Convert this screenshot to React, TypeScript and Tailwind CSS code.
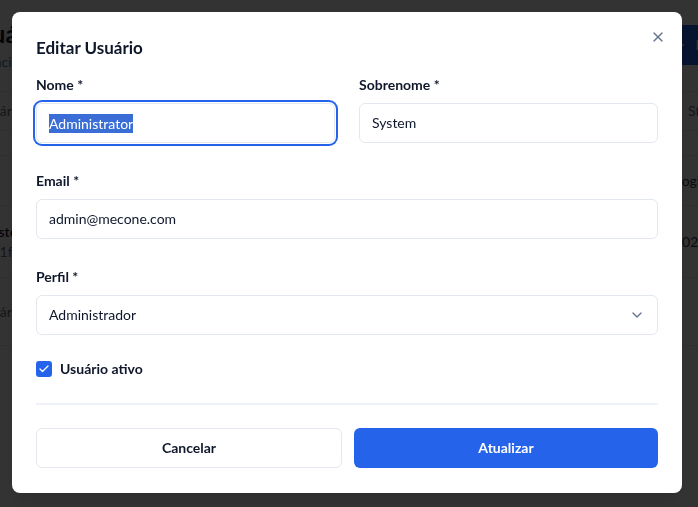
// EditUserDialog

import { X, ChevronDown, Check, Plus } from "lucide-react";

const font = { fontFamily: "Lato, 'Noto Sans', sans-serif" };

const BackgroundPage = () => {
  return (
    <div className="h-[507px] w-[698px] overflow-hidden bg-white">
      <div className="-ml-[96px] flex w-[900px] flex-col">
        <div className="flex items-start justify-between pl-[60px] pt-[18px]">
          <div>
            <div className="text-2xl font-bold text-slate-900">Usuários Mecone</div>
            <div className="mt-0.5 text-sm text-slate-500">Gerencie os usuários do sistema</div>
          </div>
          <div className="mt-[7px] flex h-10 items-center gap-2 rounded-md bg-[#2563eb] px-6 text-sm font-semibold text-white">
            <Plus size={16} />
            Novo Usuário
          </div>
        </div>
        <div className="mt-[19px] border-t border-slate-200">
          <div className="flex h-[39px] items-center border-b border-slate-200 pl-[72px] text-sm text-slate-500">
            <span className="flex-1">Usuário</span>
            <span className="w-[116px]">Status</span>
          </div>
          <div className="h-[25px] border-b border-slate-200" />
          <div className="flex h-[50px] items-center border-b border-slate-200 pl-[72px] text-sm text-slate-700">
            <span className="flex-1" />
            <span className="w-[129px]">Login</span>
          </div>
          <div className="flex h-[72px] items-center border-b border-slate-200 pl-[80px] text-sm">
            <div className="flex-1">
              <div className="font-semibold text-slate-900">System</div>
              <div className="text-slate-500">9e1f</div>
            </div>
            <span className="w-[130px] text-slate-700">2025</span>
          </div>
          <div className="flex h-[68px] items-center border-b border-slate-200 pl-[72px] text-sm text-slate-500">
            Usuário
          </div>
        </div>
      </div>
    </div>
  );
};

const Label = ({ children }: { children: React.ReactNode }) => (
  <label className="mb-2 block text-sm font-bold leading-5 text-slate-900">{children}</label>
);

const inputClass =
  "flex h-10 w-full items-center rounded-md border border-[#e3e8ef] bg-white px-3 text-sm text-slate-900";

export default function App() {
  return (
    <div className="relative h-[507px] w-[698px] overflow-hidden" style={font}>
      <BackgroundPage />
      <div className="fixed inset-0 z-50 flex items-center justify-center bg-black/80 pb-[2px] pr-1">
        <div className="relative w-[670px] rounded-lg bg-white px-6 pb-[25px] pt-[22px] shadow-lg">
          <button className="absolute right-4 top-[17px] text-slate-500">
            <X size={16} />
          </button>
          <h2 className="text-[17px] font-bold leading-7 text-slate-900">Editar Usuário</h2>
          <div className="mt-[13px] flex flex-col">
            <div className="grid grid-cols-2 gap-6">
              <div>
                <Label>Nome *</Label>
                <div className={`${inputClass} ring-2 ring-[#2563eb] ring-offset-1`}>
                  <span className="bg-[#3a6ed6] leading-[19px] text-white">Administrator</span>
                </div>
              </div>
              <div>
                <Label>Sobrenome *</Label>
                <div className={inputClass}>System</div>
              </div>
            </div>
            <div className="mt-7">
              <Label>Email *</Label>
              <div className={inputClass}>admin@mecone.com</div>
            </div>
            <div className="mt-7">
              <Label>Perfil *</Label>
              <div className={`${inputClass} justify-between`}>
                <span>Administrador</span>
                <ChevronDown size={16} className="text-slate-500" />
              </div>
            </div>
            <div className="mt-6 flex h-5 items-center gap-2">
              <div className="flex h-4 w-4 items-center justify-center rounded-[3px] bg-[#2563eb] text-white">
                <Check size={12} strokeWidth={2.5} />
              </div>
              <span className="text-sm font-bold text-slate-900">Usuário ativo</span>
            </div>
            <div className="mt-6 flex gap-3 border-t-2 border-[#eff2f6] pt-[23px]">
              <button className="h-10 flex-1 rounded-md border border-[#e3e8ef] bg-white text-sm font-bold text-slate-900">
                Cancelar
              </button>
              <button className="h-10 flex-1 rounded-md bg-[#2563eb] text-sm font-bold text-white">
                Atualizar
              </button>
            </div>
          </div>
        </div>
      </div>
    </div>
  );
}
